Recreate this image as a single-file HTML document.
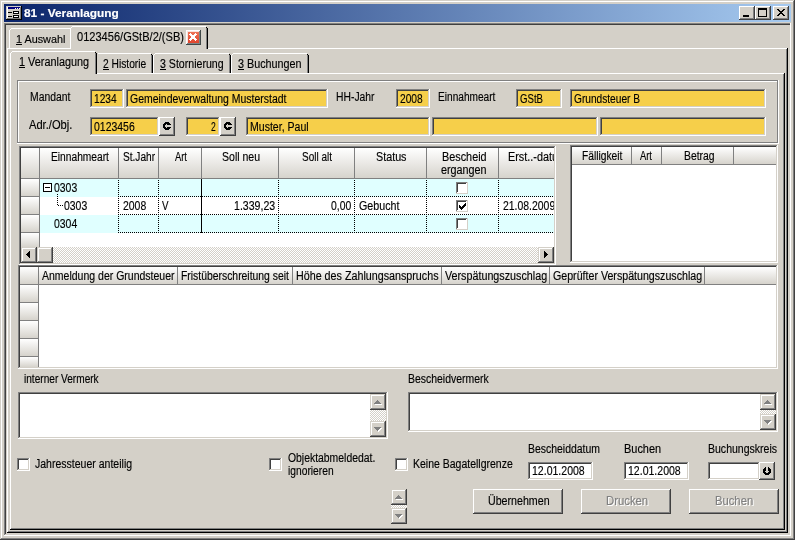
<!DOCTYPE html>
<html lang="de"><head><meta charset="utf-8"><title>81 - Veranlagung</title><style>
html,body{margin:0;padding:0}
body{width:795px;height:544px;background:#fff;overflow:hidden;position:relative;font-family:"Liberation Sans",sans-serif}
#w{position:absolute;left:0;top:0;width:795px;height:540px;background:#d4d0c8;overflow:hidden}
#w div{position:absolute}
#tx{left:0;top:0;width:795px;height:540px;will-change:transform}
.t{position:absolute;white-space:pre;transform-origin:0 0;-webkit-text-stroke-width:0.15px}
svg{position:absolute;overflow:visible}
</style></head><body><div id="w">
<svg width="0" height="0" style="left:0;top:0"><defs><pattern id="dz0" width="2" height="2" patternUnits="userSpaceOnUse"><rect width="2" height="2" fill="#d4d0c8"/><rect width="1" height="1" fill="#fff"/><rect x="1" y="1" width="1" height="1" fill="#fff"/></pattern><pattern id="dz1" width="2" height="2" patternUnits="userSpaceOnUse"><rect width="2" height="2" fill="#fff"/><rect width="1" height="1" fill="#d4d0c8"/><rect x="1" y="1" width="1" height="1" fill="#d4d0c8"/></pattern><pattern id="dt0" width="2" height="2" patternUnits="userSpaceOnUse"><rect width="1" height="1" fill="#000"/><rect x="1" y="1" width="1" height="1" fill="#000"/></pattern><pattern id="dt1" width="2" height="2" patternUnits="userSpaceOnUse"><rect x="1" y="0" width="1" height="1" fill="#000"/><rect x="0" y="1" width="1" height="1" fill="#000"/></pattern></defs></svg>
<div style="left:0px;top:539px;width:795px;height:1px;background:#404040;"></div>
<div style="left:794px;top:0px;width:1px;height:540px;background:#404040;"></div>
<div style="left:1px;top:538px;width:793px;height:1px;background:#808080;"></div>
<div style="left:793px;top:1px;width:1px;height:538px;background:#808080;"></div>
<div style="left:1px;top:1px;width:792px;height:1px;background:#ffffff;"></div>
<div style="left:1px;top:1px;width:1px;height:537px;background:#ffffff;"></div>
<div style="left:4px;top:4px;width:787px;height:18px;background:linear-gradient(to right,#0a246a,#a6caf0)"></div>
<div style="left:6px;top:6px;width:16px;height:14px;background:#d0ccc4;"></div>
<div style="left:6px;top:19px;width:16px;height:1px;background:#000;"></div>
<div style="left:21px;top:6px;width:1px;height:14px;background:#000;"></div>
<div style="left:7px;top:18px;width:14px;height:1px;background:#808080;"></div>
<div style="left:20px;top:7px;width:1px;height:12px;background:#808080;"></div>
<div style="left:7px;top:7px;width:13px;height:1px;background:#ffffff;"></div>
<div style="left:7px;top:7px;width:1px;height:11px;background:#ffffff;"></div>
<div style="left:8px;top:7px;width:12px;height:2px;background:#000080;"></div>
<div style="left:15px;top:8px;width:1px;height:1px;background:#ffffff;"></div>
<div style="left:17px;top:8px;width:1px;height:1px;background:#ffffff;"></div>
<div style="left:19px;top:8px;width:1px;height:1px;background:#ffffff;"></div>
<div style="left:8px;top:12px;width:4px;height:1px;background:#000;"></div>
<div style="left:13px;top:11px;width:6px;height:3px;background:#000;"></div>
<div style="left:14px;top:12px;width:4px;height:1px;background:#ffffff;"></div>
<div style="left:8px;top:16px;width:4px;height:1px;background:#000;"></div>
<div style="left:13px;top:15px;width:6px;height:3px;background:#000;"></div>
<div style="left:14px;top:16px;width:4px;height:1px;background:#ffffff;"></div>
<div style="left:739px;top:6px;width:16px;height:14px;background:#d4d0c8;"></div>
<div style="left:739px;top:19px;width:16px;height:1px;background:#404040;"></div>
<div style="left:754px;top:6px;width:1px;height:14px;background:#404040;"></div>
<div style="left:739px;top:6px;width:15px;height:1px;background:#ffffff;"></div>
<div style="left:739px;top:6px;width:1px;height:13px;background:#ffffff;"></div>
<div style="left:740px;top:18px;width:14px;height:1px;background:#808080;"></div>
<div style="left:753px;top:7px;width:1px;height:12px;background:#808080;"></div>
<div style="left:740px;top:7px;width:13px;height:1px;background:#d4d0c8;"></div>
<div style="left:740px;top:7px;width:1px;height:11px;background:#d4d0c8;"></div>
<div style="left:755px;top:6px;width:16px;height:14px;background:#d4d0c8;"></div>
<div style="left:755px;top:19px;width:16px;height:1px;background:#404040;"></div>
<div style="left:770px;top:6px;width:1px;height:14px;background:#404040;"></div>
<div style="left:755px;top:6px;width:15px;height:1px;background:#ffffff;"></div>
<div style="left:755px;top:6px;width:1px;height:13px;background:#ffffff;"></div>
<div style="left:756px;top:18px;width:14px;height:1px;background:#808080;"></div>
<div style="left:769px;top:7px;width:1px;height:12px;background:#808080;"></div>
<div style="left:756px;top:7px;width:13px;height:1px;background:#d4d0c8;"></div>
<div style="left:756px;top:7px;width:1px;height:11px;background:#d4d0c8;"></div>
<div style="left:773px;top:6px;width:16px;height:14px;background:#d4d0c8;"></div>
<div style="left:773px;top:19px;width:16px;height:1px;background:#404040;"></div>
<div style="left:788px;top:6px;width:1px;height:14px;background:#404040;"></div>
<div style="left:773px;top:6px;width:15px;height:1px;background:#ffffff;"></div>
<div style="left:773px;top:6px;width:1px;height:13px;background:#ffffff;"></div>
<div style="left:774px;top:18px;width:14px;height:1px;background:#808080;"></div>
<div style="left:787px;top:7px;width:1px;height:12px;background:#808080;"></div>
<div style="left:774px;top:7px;width:13px;height:1px;background:#d4d0c8;"></div>
<div style="left:774px;top:7px;width:1px;height:11px;background:#d4d0c8;"></div>
<div style="left:743px;top:15px;width:6px;height:2px;background:#000;"></div>
<div style="left:758px;top:8px;width:9px;height:2px;background:#000;"></div>
<div style="left:758px;top:8px;width:1px;height:9px;background:#000;"></div>
<div style="left:766px;top:8px;width:1px;height:9px;background:#000;"></div>
<div style="left:758px;top:16px;width:9px;height:1px;background:#000;"></div>
<svg style="left:777px;top:9px" width="8" height="7" shape-rendering="crispEdges"><path d="M0 0h2v1h1v1h2v-1h1v-1h2v1h-1v1h-1v1h-1v1h1v1h1v1h1v1h-2v-1h-1v-1h-2v1h-1v1h-2v-1h1v-1h1v-1h1v-1h-1v-1h-1v-1h-1z" fill="#000"/></svg>
<div style="left:4px;top:23px;width:787px;height:1px;background:#808080;"></div>
<div style="left:4px;top:23px;width:1px;height:512px;background:#808080;"></div>
<div style="left:5px;top:24px;width:785px;height:1px;background:#404040;"></div>
<div style="left:5px;top:24px;width:1px;height:510px;background:#404040;"></div>
<div style="left:4px;top:535px;width:787px;height:1px;background:#ffffff;"></div>
<div style="left:790px;top:23px;width:1px;height:513px;background:#ffffff;"></div>
<div style="left:7px;top:48px;width:781px;height:1px;background:#ffffff;"></div>
<div style="left:7px;top:48px;width:1px;height:484px;background:#ffffff;"></div>
<div style="left:786px;top:49px;width:1px;height:483px;background:#808080;"></div>
<div style="left:8px;top:531px;width:779px;height:1px;background:#808080;"></div>
<div style="left:787px;top:48px;width:1px;height:485px;background:#000;"></div>
<div style="left:7px;top:532px;width:781px;height:1px;background:#000;"></div>
<div style="left:9px;top:30px;width:1px;height:18px;background:#ffffff;"></div>
<div style="left:10px;top:29px;width:1px;height:1px;background:#ffffff;"></div>
<div style="left:11px;top:28px;width:59px;height:1px;background:#ffffff;"></div>
<div style="left:16px;top:44px;width:6px;height:1px;background:#000;"></div>
<div style="left:70px;top:26px;width:138px;height:23px;background:#d4d0c8;"></div>
<div style="left:70px;top:28px;width:1px;height:21px;background:#ffffff;"></div>
<div style="left:71px;top:27px;width:1px;height:1px;background:#ffffff;"></div>
<div style="left:72px;top:26px;width:134px;height:1px;background:#ffffff;"></div>
<div style="left:206px;top:28px;width:1px;height:21px;background:#808080;"></div>
<div style="left:207px;top:28px;width:1px;height:21px;background:#000;"></div>
<div style="left:206px;top:27px;width:1px;height:1px;background:#000;"></div>
<div style="left:188px;top:32px;width:11px;height:11px;background:linear-gradient(to bottom,#ee7458,#e0442c);"></div>
<div style="left:186px;top:30px;width:14px;height:1px;background:#ffffff;"></div>
<div style="left:186px;top:30px;width:1px;height:14px;background:#ffffff;"></div>
<div style="left:186px;top:44px;width:15px;height:1px;background:#404848;"></div>
<div style="left:200px;top:30px;width:1px;height:15px;background:#404848;"></div>
<div style="left:187px;top:31px;width:12px;height:1px;background:#f8e4de;"></div>
<div style="left:187px;top:31px;width:1px;height:12px;background:#f8e4de;"></div>
<div style="left:187px;top:43px;width:13px;height:1px;background:#7c8484;"></div>
<div style="left:199px;top:31px;width:1px;height:13px;background:#7c8484;"></div>
<svg style="left:189px;top:33px" width="8" height="8" shape-rendering="crispEdges"><path d="M1 0h1v1h-1zM6 0h1v1h-1zM0 1h3v1h-3zM5 1h3v1h-3zM1 2h6v1h-6zM2 3h4v1h-4zM2 4h4v1h-4zM1 5h6v1h-6zM0 6h3v1h-3zM5 6h3v1h-3zM1 7h1v1h-1zM6 7h1v1h-1z" fill="#fff"/></svg>
<div style="left:10px;top:73px;width:775px;height:1px;background:#ffffff;"></div>
<div style="left:10px;top:73px;width:1px;height:456px;background:#ffffff;"></div>
<div style="left:783px;top:74px;width:1px;height:455px;background:#808080;"></div>
<div style="left:11px;top:528px;width:773px;height:1px;background:#808080;"></div>
<div style="left:784px;top:73px;width:1px;height:457px;background:#000;"></div>
<div style="left:10px;top:529px;width:775px;height:1px;background:#000;"></div>
<div style="left:98px;top:53px;width:53px;height:1px;background:#ffffff;"></div>
<div style="left:151px;top:55px;width:1px;height:18px;background:#808080;"></div>
<div style="left:152px;top:55px;width:1px;height:18px;background:#000;"></div>
<div style="left:151px;top:54px;width:1px;height:1px;background:#000;"></div>
<div style="left:103px;top:69px;width:6px;height:1px;background:#000;"></div>
<div style="left:153px;top:55px;width:1px;height:18px;background:#ffffff;"></div>
<div style="left:154px;top:54px;width:1px;height:1px;background:#ffffff;"></div>
<div style="left:155px;top:53px;width:74px;height:1px;background:#ffffff;"></div>
<div style="left:229px;top:55px;width:1px;height:18px;background:#808080;"></div>
<div style="left:230px;top:55px;width:1px;height:18px;background:#000;"></div>
<div style="left:229px;top:54px;width:1px;height:1px;background:#000;"></div>
<div style="left:160px;top:69px;width:6px;height:1px;background:#000;"></div>
<div style="left:231px;top:55px;width:1px;height:18px;background:#ffffff;"></div>
<div style="left:232px;top:54px;width:1px;height:1px;background:#ffffff;"></div>
<div style="left:233px;top:53px;width:74px;height:1px;background:#ffffff;"></div>
<div style="left:307px;top:55px;width:1px;height:18px;background:#808080;"></div>
<div style="left:308px;top:55px;width:1px;height:18px;background:#000;"></div>
<div style="left:307px;top:54px;width:1px;height:1px;background:#000;"></div>
<div style="left:238px;top:69px;width:6px;height:1px;background:#000;"></div>
<div style="left:10px;top:51px;width:87px;height:23px;background:#d4d0c8;"></div>
<div style="left:10px;top:53px;width:1px;height:21px;background:#ffffff;"></div>
<div style="left:11px;top:52px;width:1px;height:1px;background:#ffffff;"></div>
<div style="left:12px;top:51px;width:83px;height:1px;background:#ffffff;"></div>
<div style="left:95px;top:53px;width:1px;height:21px;background:#808080;"></div>
<div style="left:96px;top:53px;width:1px;height:21px;background:#000;"></div>
<div style="left:95px;top:52px;width:1px;height:1px;background:#000;"></div>
<div style="left:19px;top:67px;width:6px;height:1px;background:#000;"></div>
<div style="left:17px;top:80px;width:761px;height:1px;background:#808080;"></div>
<div style="left:17px;top:80px;width:1px;height:63px;background:#808080;"></div>
<div style="left:17px;top:142px;width:761px;height:1px;background:#808080;"></div>
<div style="left:777px;top:80px;width:1px;height:63px;background:#808080;"></div>
<div style="left:18px;top:81px;width:759px;height:1px;background:#ffffff;"></div>
<div style="left:18px;top:81px;width:1px;height:61px;background:#ffffff;"></div>
<div style="left:17px;top:143px;width:762px;height:1px;background:#ffffff;"></div>
<div style="left:778px;top:80px;width:1px;height:64px;background:#ffffff;"></div>
<div style="left:90px;top:89px;width:34px;height:19px;background:#f6cf4a;"></div>
<div style="left:90px;top:107px;width:34px;height:1px;background:#ffffff;"></div>
<div style="left:123px;top:89px;width:1px;height:19px;background:#ffffff;"></div>
<div style="left:90px;top:89px;width:33px;height:1px;background:#808080;"></div>
<div style="left:90px;top:89px;width:1px;height:18px;background:#808080;"></div>
<div style="left:91px;top:106px;width:32px;height:1px;background:#d4d0c8;"></div>
<div style="left:122px;top:90px;width:1px;height:17px;background:#d4d0c8;"></div>
<div style="left:91px;top:90px;width:31px;height:1px;background:#404040;"></div>
<div style="left:91px;top:90px;width:1px;height:16px;background:#404040;"></div>
<div style="left:126px;top:89px;width:202px;height:19px;background:#f6cf4a;"></div>
<div style="left:126px;top:107px;width:202px;height:1px;background:#ffffff;"></div>
<div style="left:327px;top:89px;width:1px;height:19px;background:#ffffff;"></div>
<div style="left:126px;top:89px;width:201px;height:1px;background:#808080;"></div>
<div style="left:126px;top:89px;width:1px;height:18px;background:#808080;"></div>
<div style="left:127px;top:106px;width:200px;height:1px;background:#d4d0c8;"></div>
<div style="left:326px;top:90px;width:1px;height:17px;background:#d4d0c8;"></div>
<div style="left:127px;top:90px;width:199px;height:1px;background:#404040;"></div>
<div style="left:127px;top:90px;width:1px;height:16px;background:#404040;"></div>
<div style="left:396px;top:89px;width:34px;height:19px;background:#f6cf4a;"></div>
<div style="left:396px;top:107px;width:34px;height:1px;background:#ffffff;"></div>
<div style="left:429px;top:89px;width:1px;height:19px;background:#ffffff;"></div>
<div style="left:396px;top:89px;width:33px;height:1px;background:#808080;"></div>
<div style="left:396px;top:89px;width:1px;height:18px;background:#808080;"></div>
<div style="left:397px;top:106px;width:32px;height:1px;background:#d4d0c8;"></div>
<div style="left:428px;top:90px;width:1px;height:17px;background:#d4d0c8;"></div>
<div style="left:397px;top:90px;width:31px;height:1px;background:#404040;"></div>
<div style="left:397px;top:90px;width:1px;height:16px;background:#404040;"></div>
<div style="left:516px;top:89px;width:46px;height:19px;background:#f6cf4a;"></div>
<div style="left:516px;top:107px;width:46px;height:1px;background:#ffffff;"></div>
<div style="left:561px;top:89px;width:1px;height:19px;background:#ffffff;"></div>
<div style="left:516px;top:89px;width:45px;height:1px;background:#808080;"></div>
<div style="left:516px;top:89px;width:1px;height:18px;background:#808080;"></div>
<div style="left:517px;top:106px;width:44px;height:1px;background:#d4d0c8;"></div>
<div style="left:560px;top:90px;width:1px;height:17px;background:#d4d0c8;"></div>
<div style="left:517px;top:90px;width:43px;height:1px;background:#404040;"></div>
<div style="left:517px;top:90px;width:1px;height:16px;background:#404040;"></div>
<div style="left:570px;top:89px;width:196px;height:19px;background:#f6cf4a;"></div>
<div style="left:570px;top:107px;width:196px;height:1px;background:#ffffff;"></div>
<div style="left:765px;top:89px;width:1px;height:19px;background:#ffffff;"></div>
<div style="left:570px;top:89px;width:195px;height:1px;background:#808080;"></div>
<div style="left:570px;top:89px;width:1px;height:18px;background:#808080;"></div>
<div style="left:571px;top:106px;width:194px;height:1px;background:#d4d0c8;"></div>
<div style="left:764px;top:90px;width:1px;height:17px;background:#d4d0c8;"></div>
<div style="left:571px;top:90px;width:193px;height:1px;background:#404040;"></div>
<div style="left:571px;top:90px;width:1px;height:16px;background:#404040;"></div>
<div style="left:90px;top:117px;width:69px;height:19px;background:#f6cf4a;"></div>
<div style="left:90px;top:135px;width:69px;height:1px;background:#ffffff;"></div>
<div style="left:158px;top:117px;width:1px;height:19px;background:#ffffff;"></div>
<div style="left:90px;top:117px;width:68px;height:1px;background:#808080;"></div>
<div style="left:90px;top:117px;width:1px;height:18px;background:#808080;"></div>
<div style="left:91px;top:134px;width:67px;height:1px;background:#d4d0c8;"></div>
<div style="left:157px;top:118px;width:1px;height:17px;background:#d4d0c8;"></div>
<div style="left:91px;top:118px;width:66px;height:1px;background:#404040;"></div>
<div style="left:91px;top:118px;width:1px;height:16px;background:#404040;"></div>
<div style="left:159px;top:117px;width:16px;height:19px;background:#d4d0c8;"></div>
<div style="left:159px;top:135px;width:16px;height:1px;background:#404040;"></div>
<div style="left:174px;top:117px;width:1px;height:19px;background:#404040;"></div>
<div style="left:159px;top:117px;width:15px;height:1px;background:#ffffff;"></div>
<div style="left:159px;top:117px;width:1px;height:18px;background:#ffffff;"></div>
<div style="left:160px;top:134px;width:14px;height:1px;background:#808080;"></div>
<div style="left:173px;top:118px;width:1px;height:17px;background:#808080;"></div>
<div style="left:160px;top:118px;width:13px;height:1px;background:#d4d0c8;"></div>
<div style="left:160px;top:118px;width:1px;height:16px;background:#d4d0c8;"></div>
<div style="left:186px;top:117px;width:34px;height:19px;background:#f6cf4a;"></div>
<div style="left:186px;top:135px;width:34px;height:1px;background:#ffffff;"></div>
<div style="left:219px;top:117px;width:1px;height:19px;background:#ffffff;"></div>
<div style="left:186px;top:117px;width:33px;height:1px;background:#808080;"></div>
<div style="left:186px;top:117px;width:1px;height:18px;background:#808080;"></div>
<div style="left:187px;top:134px;width:32px;height:1px;background:#d4d0c8;"></div>
<div style="left:218px;top:118px;width:1px;height:17px;background:#d4d0c8;"></div>
<div style="left:187px;top:118px;width:31px;height:1px;background:#404040;"></div>
<div style="left:187px;top:118px;width:1px;height:16px;background:#404040;"></div>
<div style="left:220px;top:117px;width:16px;height:19px;background:#d4d0c8;"></div>
<div style="left:220px;top:135px;width:16px;height:1px;background:#404040;"></div>
<div style="left:235px;top:117px;width:1px;height:19px;background:#404040;"></div>
<div style="left:220px;top:117px;width:15px;height:1px;background:#ffffff;"></div>
<div style="left:220px;top:117px;width:1px;height:18px;background:#ffffff;"></div>
<div style="left:221px;top:134px;width:14px;height:1px;background:#808080;"></div>
<div style="left:234px;top:118px;width:1px;height:17px;background:#808080;"></div>
<div style="left:221px;top:118px;width:13px;height:1px;background:#d4d0c8;"></div>
<div style="left:221px;top:118px;width:1px;height:16px;background:#d4d0c8;"></div>
<div style="left:246px;top:117px;width:184px;height:19px;background:#f6cf4a;"></div>
<div style="left:246px;top:135px;width:184px;height:1px;background:#ffffff;"></div>
<div style="left:429px;top:117px;width:1px;height:19px;background:#ffffff;"></div>
<div style="left:246px;top:117px;width:183px;height:1px;background:#808080;"></div>
<div style="left:246px;top:117px;width:1px;height:18px;background:#808080;"></div>
<div style="left:247px;top:134px;width:182px;height:1px;background:#d4d0c8;"></div>
<div style="left:428px;top:118px;width:1px;height:17px;background:#d4d0c8;"></div>
<div style="left:247px;top:118px;width:181px;height:1px;background:#404040;"></div>
<div style="left:247px;top:118px;width:1px;height:16px;background:#404040;"></div>
<div style="left:432px;top:117px;width:166px;height:19px;background:#f6cf4a;"></div>
<div style="left:432px;top:135px;width:166px;height:1px;background:#ffffff;"></div>
<div style="left:597px;top:117px;width:1px;height:19px;background:#ffffff;"></div>
<div style="left:432px;top:117px;width:165px;height:1px;background:#808080;"></div>
<div style="left:432px;top:117px;width:1px;height:18px;background:#808080;"></div>
<div style="left:433px;top:134px;width:164px;height:1px;background:#d4d0c8;"></div>
<div style="left:596px;top:118px;width:1px;height:17px;background:#d4d0c8;"></div>
<div style="left:433px;top:118px;width:163px;height:1px;background:#404040;"></div>
<div style="left:433px;top:118px;width:1px;height:16px;background:#404040;"></div>
<div style="left:600px;top:117px;width:166px;height:19px;background:#f6cf4a;"></div>
<div style="left:600px;top:135px;width:166px;height:1px;background:#ffffff;"></div>
<div style="left:765px;top:117px;width:1px;height:19px;background:#ffffff;"></div>
<div style="left:600px;top:117px;width:165px;height:1px;background:#808080;"></div>
<div style="left:600px;top:117px;width:1px;height:18px;background:#808080;"></div>
<div style="left:601px;top:134px;width:164px;height:1px;background:#d4d0c8;"></div>
<div style="left:764px;top:118px;width:1px;height:17px;background:#d4d0c8;"></div>
<div style="left:601px;top:118px;width:163px;height:1px;background:#404040;"></div>
<div style="left:601px;top:118px;width:1px;height:16px;background:#404040;"></div>
<svg style="left:163px;top:122px" width="8" height="8" shape-rendering="crispEdges"><path d="M2 0h4v1h-4zM1 1h6v1h-6zM0 2h3v1h-3zM4 2h4v1h-4zM0 3h2v1h-2zM0 4h2v1h-2zM0 5h3v1h-3zM4 5h4v1h-4zM1 6h6v1h-6zM2 7h4v1h-4z" fill="#000"/></svg>
<svg style="left:224px;top:122px" width="8" height="8" shape-rendering="crispEdges"><path d="M2 0h4v1h-4zM1 1h6v1h-6zM0 2h3v1h-3zM4 2h4v1h-4zM0 3h2v1h-2zM0 4h2v1h-2zM0 5h3v1h-3zM4 5h4v1h-4zM1 6h6v1h-6zM2 7h4v1h-4z" fill="#000"/></svg>
<div style="left:19px;top:146px;width:537px;height:119px;background:#fff;"></div>
<div style="left:19px;top:264px;width:537px;height:1px;background:#ffffff;"></div>
<div style="left:555px;top:146px;width:1px;height:119px;background:#ffffff;"></div>
<div style="left:19px;top:146px;width:536px;height:1px;background:#808080;"></div>
<div style="left:19px;top:146px;width:1px;height:118px;background:#808080;"></div>
<div style="left:20px;top:263px;width:535px;height:1px;background:#d4d0c8;"></div>
<div style="left:554px;top:147px;width:1px;height:117px;background:#d4d0c8;"></div>
<div style="left:20px;top:147px;width:534px;height:1px;background:#404040;"></div>
<div style="left:20px;top:147px;width:1px;height:116px;background:#404040;"></div>
<div style="left:21px;top:148px;width:533px;height:30px;background:linear-gradient(to bottom,#ffffff,#d6d3cc);"></div>
<div style="left:39px;top:148px;width:1px;height:30px;background:#808080;"></div>
<div style="left:118px;top:148px;width:1px;height:30px;background:#808080;"></div>
<div style="left:158px;top:148px;width:1px;height:30px;background:#808080;"></div>
<div style="left:201px;top:148px;width:1px;height:30px;background:#808080;"></div>
<div style="left:278px;top:148px;width:1px;height:30px;background:#808080;"></div>
<div style="left:354px;top:148px;width:1px;height:30px;background:#808080;"></div>
<div style="left:426px;top:148px;width:1px;height:30px;background:#808080;"></div>
<div style="left:498px;top:148px;width:1px;height:30px;background:#808080;"></div>
<div style="left:21px;top:178px;width:533px;height:1px;background:#808080;"></div>
<div style="left:21px;top:179px;width:18px;height:17px;background:linear-gradient(to bottom,#ffffff,#d6d3cc);"></div>
<div style="left:21px;top:196px;width:18px;height:1px;background:#808080;"></div>
<div style="left:21px;top:197px;width:18px;height:17px;background:linear-gradient(to bottom,#ffffff,#d6d3cc);"></div>
<div style="left:21px;top:214px;width:18px;height:1px;background:#808080;"></div>
<div style="left:21px;top:215px;width:18px;height:17px;background:linear-gradient(to bottom,#ffffff,#d6d3cc);"></div>
<div style="left:21px;top:232px;width:18px;height:1px;background:#808080;"></div>
<div style="left:21px;top:233px;width:18px;height:14px;background:linear-gradient(to bottom,#ffffff,#d6d3cc);"></div>
<div style="left:39px;top:179px;width:1px;height:68px;background:#808080;"></div>
<div style="left:40px;top:179px;width:514px;height:18px;background:#e0ffff;"></div>
<div style="left:40px;top:215px;width:514px;height:18px;background:#e0ffff;"></div>
<svg style="left:118px;top:196px" width="436" height="1" shape-rendering="crispEdges"><rect width="436" height="1" fill="url(#dt0)"/></svg>
<svg style="left:118px;top:214px" width="436" height="1" shape-rendering="crispEdges"><rect width="436" height="1" fill="url(#dt0)"/></svg>
<svg style="left:118px;top:232px" width="436" height="1" shape-rendering="crispEdges"><rect width="436" height="1" fill="url(#dt0)"/></svg>
<svg style="left:118px;top:179px" width="1" height="54" shape-rendering="crispEdges"><rect width="1" height="54" fill="url(#dt1)"/></svg>
<svg style="left:158px;top:179px" width="1" height="54" shape-rendering="crispEdges"><rect width="1" height="54" fill="url(#dt1)"/></svg>
<svg style="left:278px;top:179px" width="1" height="54" shape-rendering="crispEdges"><rect width="1" height="54" fill="url(#dt1)"/></svg>
<svg style="left:354px;top:179px" width="1" height="54" shape-rendering="crispEdges"><rect width="1" height="54" fill="url(#dt1)"/></svg>
<svg style="left:426px;top:179px" width="1" height="54" shape-rendering="crispEdges"><rect width="1" height="54" fill="url(#dt1)"/></svg>
<svg style="left:498px;top:179px" width="1" height="54" shape-rendering="crispEdges"><rect width="1" height="54" fill="url(#dt1)"/></svg>
<div style="left:201px;top:179px;width:1px;height:54px;background:#000;"></div>
<div style="left:43px;top:183px;width:9px;height:1px;background:#000;"></div>
<div style="left:43px;top:183px;width:1px;height:9px;background:#000;"></div>
<div style="left:43px;top:191px;width:9px;height:1px;background:#000;"></div>
<div style="left:51px;top:183px;width:1px;height:9px;background:#000;"></div>
<div style="left:44px;top:184px;width:7px;height:7px;background:#fff;"></div>
<div style="left:45px;top:187px;width:5px;height:1px;background:#000;"></div>
<svg style="left:57px;top:193px" width="1" height="13" shape-rendering="crispEdges"><rect width="1" height="13" fill="url(#dt1)"/></svg>
<svg style="left:57px;top:205px" width="6" height="1" shape-rendering="crispEdges"><rect width="6" height="1" fill="url(#dt1)"/></svg>
<div style="left:456px;top:182px;width:12px;height:12px;background:#fff;"></div>
<div style="left:456px;top:182px;width:11px;height:1px;background:#808080;"></div>
<div style="left:456px;top:182px;width:1px;height:11px;background:#808080;"></div>
<div style="left:457px;top:183px;width:9px;height:1px;background:#404040;"></div>
<div style="left:457px;top:183px;width:1px;height:9px;background:#404040;"></div>
<div style="left:456px;top:193px;width:12px;height:1px;background:#d4d0c8;"></div>
<div style="left:467px;top:182px;width:1px;height:12px;background:#d4d0c8;"></div>
<div style="left:456px;top:200px;width:12px;height:12px;background:#fff;"></div>
<div style="left:456px;top:200px;width:11px;height:1px;background:#808080;"></div>
<div style="left:456px;top:200px;width:1px;height:11px;background:#808080;"></div>
<div style="left:457px;top:201px;width:9px;height:1px;background:#404040;"></div>
<div style="left:457px;top:201px;width:1px;height:9px;background:#404040;"></div>
<div style="left:456px;top:211px;width:12px;height:1px;background:#d4d0c8;"></div>
<div style="left:467px;top:200px;width:1px;height:12px;background:#d4d0c8;"></div>
<svg style="left:459px;top:203px" width="7" height="7" shape-rendering="crispEdges"><path d="M6 0h1v1h-1zM5 1h2v1h-2zM0 2h1v1h-1zM4 2h3v1h-3zM0 3h2v1h-2zM3 3h3v1h-3zM0 4h5v1h-5zM1 5h3v1h-3zM2 6h1v1h-1z" fill="#000"/></svg>
<div style="left:456px;top:218px;width:12px;height:12px;background:#fff;"></div>
<div style="left:456px;top:218px;width:11px;height:1px;background:#808080;"></div>
<div style="left:456px;top:218px;width:1px;height:11px;background:#808080;"></div>
<div style="left:457px;top:219px;width:9px;height:1px;background:#404040;"></div>
<div style="left:457px;top:219px;width:1px;height:9px;background:#404040;"></div>
<div style="left:456px;top:229px;width:12px;height:1px;background:#d4d0c8;"></div>
<div style="left:467px;top:218px;width:1px;height:12px;background:#d4d0c8;"></div>
<svg style="left:21px;top:247px" width="533" height="16" shape-rendering="crispEdges"><rect width="533" height="16" fill="url(#dz0)"/></svg>
<div style="left:21px;top:247px;width:16px;height:16px;background:#d4d0c8;"></div>
<div style="left:21px;top:262px;width:16px;height:1px;background:#404040;"></div>
<div style="left:36px;top:247px;width:1px;height:16px;background:#404040;"></div>
<div style="left:21px;top:247px;width:15px;height:1px;background:#d4d0c8;"></div>
<div style="left:21px;top:247px;width:1px;height:15px;background:#d4d0c8;"></div>
<div style="left:22px;top:261px;width:14px;height:1px;background:#808080;"></div>
<div style="left:35px;top:248px;width:1px;height:14px;background:#808080;"></div>
<div style="left:22px;top:248px;width:13px;height:1px;background:#ffffff;"></div>
<div style="left:22px;top:248px;width:1px;height:13px;background:#ffffff;"></div>
<div style="left:29px;top:251px;width:1px;height:1px;background:#000;"></div>
<div style="left:28px;top:252px;width:2px;height:1px;background:#000;"></div>
<div style="left:27px;top:253px;width:3px;height:1px;background:#000;"></div>
<div style="left:26px;top:254px;width:4px;height:1px;background:#000;"></div>
<div style="left:27px;top:255px;width:3px;height:1px;background:#000;"></div>
<div style="left:28px;top:256px;width:2px;height:1px;background:#000;"></div>
<div style="left:29px;top:257px;width:1px;height:1px;background:#000;"></div>
<div style="left:37px;top:247px;width:16px;height:16px;background:#d4d0c8;"></div>
<div style="left:37px;top:262px;width:16px;height:1px;background:#404040;"></div>
<div style="left:52px;top:247px;width:1px;height:16px;background:#404040;"></div>
<div style="left:37px;top:247px;width:15px;height:1px;background:#d4d0c8;"></div>
<div style="left:37px;top:247px;width:1px;height:15px;background:#d4d0c8;"></div>
<div style="left:38px;top:261px;width:14px;height:1px;background:#808080;"></div>
<div style="left:51px;top:248px;width:1px;height:14px;background:#808080;"></div>
<div style="left:38px;top:248px;width:13px;height:1px;background:#ffffff;"></div>
<div style="left:38px;top:248px;width:1px;height:13px;background:#ffffff;"></div>
<div style="left:538px;top:247px;width:16px;height:16px;background:#d4d0c8;"></div>
<div style="left:538px;top:262px;width:16px;height:1px;background:#404040;"></div>
<div style="left:553px;top:247px;width:1px;height:16px;background:#404040;"></div>
<div style="left:538px;top:247px;width:15px;height:1px;background:#d4d0c8;"></div>
<div style="left:538px;top:247px;width:1px;height:15px;background:#d4d0c8;"></div>
<div style="left:539px;top:261px;width:14px;height:1px;background:#808080;"></div>
<div style="left:552px;top:248px;width:1px;height:14px;background:#808080;"></div>
<div style="left:539px;top:248px;width:13px;height:1px;background:#ffffff;"></div>
<div style="left:539px;top:248px;width:1px;height:13px;background:#ffffff;"></div>
<div style="left:544px;top:251px;width:1px;height:1px;background:#000;"></div>
<div style="left:544px;top:252px;width:2px;height:1px;background:#000;"></div>
<div style="left:544px;top:253px;width:3px;height:1px;background:#000;"></div>
<div style="left:544px;top:254px;width:4px;height:1px;background:#000;"></div>
<div style="left:544px;top:255px;width:3px;height:1px;background:#000;"></div>
<div style="left:544px;top:256px;width:2px;height:1px;background:#000;"></div>
<div style="left:544px;top:257px;width:1px;height:1px;background:#000;"></div>
<div style="left:570px;top:145px;width:208px;height:118px;background:#fff;"></div>
<div style="left:570px;top:262px;width:208px;height:1px;background:#ffffff;"></div>
<div style="left:777px;top:145px;width:1px;height:118px;background:#ffffff;"></div>
<div style="left:570px;top:145px;width:207px;height:1px;background:#808080;"></div>
<div style="left:570px;top:145px;width:1px;height:117px;background:#808080;"></div>
<div style="left:571px;top:261px;width:206px;height:1px;background:#d4d0c8;"></div>
<div style="left:776px;top:146px;width:1px;height:116px;background:#d4d0c8;"></div>
<div style="left:571px;top:146px;width:205px;height:1px;background:#404040;"></div>
<div style="left:571px;top:146px;width:1px;height:115px;background:#404040;"></div>
<div style="left:572px;top:147px;width:204px;height:17px;background:linear-gradient(to bottom,#ffffff,#d6d3cc);"></div>
<div style="left:572px;top:164px;width:204px;height:1px;background:#808080;"></div>
<div style="left:631px;top:147px;width:1px;height:17px;background:#808080;"></div>
<div style="left:661px;top:147px;width:1px;height:17px;background:#808080;"></div>
<div style="left:733px;top:147px;width:1px;height:17px;background:#808080;"></div>
<div style="left:18px;top:265px;width:760px;height:104px;background:#fff;"></div>
<div style="left:18px;top:368px;width:760px;height:1px;background:#ffffff;"></div>
<div style="left:777px;top:265px;width:1px;height:104px;background:#ffffff;"></div>
<div style="left:18px;top:265px;width:759px;height:1px;background:#808080;"></div>
<div style="left:18px;top:265px;width:1px;height:103px;background:#808080;"></div>
<div style="left:19px;top:367px;width:758px;height:1px;background:#d4d0c8;"></div>
<div style="left:776px;top:266px;width:1px;height:102px;background:#d4d0c8;"></div>
<div style="left:19px;top:266px;width:757px;height:1px;background:#404040;"></div>
<div style="left:19px;top:266px;width:1px;height:101px;background:#404040;"></div>
<div style="left:20px;top:267px;width:756px;height:17px;background:linear-gradient(to bottom,#ffffff,#d6d3cc);"></div>
<div style="left:20px;top:284px;width:756px;height:1px;background:#808080;"></div>
<div style="left:38px;top:267px;width:1px;height:17px;background:#808080;"></div>
<div style="left:177px;top:267px;width:1px;height:17px;background:#808080;"></div>
<div style="left:292px;top:267px;width:1px;height:17px;background:#808080;"></div>
<div style="left:441px;top:267px;width:1px;height:17px;background:#808080;"></div>
<div style="left:549px;top:267px;width:1px;height:17px;background:#808080;"></div>
<div style="left:704px;top:267px;width:1px;height:17px;background:#808080;"></div>
<div style="left:20px;top:285px;width:18px;height:17px;background:linear-gradient(to bottom,#ffffff,#d6d3cc);"></div>
<div style="left:20px;top:302px;width:18px;height:1px;background:#808080;"></div>
<div style="left:20px;top:303px;width:18px;height:17px;background:linear-gradient(to bottom,#ffffff,#d6d3cc);"></div>
<div style="left:20px;top:320px;width:18px;height:1px;background:#808080;"></div>
<div style="left:20px;top:321px;width:18px;height:17px;background:linear-gradient(to bottom,#ffffff,#d6d3cc);"></div>
<div style="left:20px;top:338px;width:18px;height:1px;background:#808080;"></div>
<div style="left:20px;top:339px;width:18px;height:17px;background:linear-gradient(to bottom,#ffffff,#d6d3cc);"></div>
<div style="left:20px;top:356px;width:18px;height:1px;background:#808080;"></div>
<div style="left:20px;top:357px;width:18px;height:10px;background:linear-gradient(to bottom,#ffffff,#d6d3cc);"></div>
<div style="left:38px;top:285px;width:1px;height:82px;background:#808080;"></div>
<div style="left:18px;top:392px;width:370px;height:47px;background:#fff;"></div>
<div style="left:18px;top:438px;width:370px;height:1px;background:#ffffff;"></div>
<div style="left:387px;top:392px;width:1px;height:47px;background:#ffffff;"></div>
<div style="left:18px;top:392px;width:369px;height:1px;background:#808080;"></div>
<div style="left:18px;top:392px;width:1px;height:46px;background:#808080;"></div>
<div style="left:19px;top:437px;width:368px;height:1px;background:#d4d0c8;"></div>
<div style="left:386px;top:393px;width:1px;height:45px;background:#d4d0c8;"></div>
<div style="left:19px;top:393px;width:367px;height:1px;background:#404040;"></div>
<div style="left:19px;top:393px;width:1px;height:44px;background:#404040;"></div>
<svg style="left:370px;top:394px" width="16" height="43" shape-rendering="crispEdges"><rect width="16" height="43" fill="url(#dz0)"/></svg>
<div style="left:370px;top:394px;width:16px;height:16px;background:#d4d0c8;"></div>
<div style="left:370px;top:409px;width:16px;height:1px;background:#404040;"></div>
<div style="left:385px;top:394px;width:1px;height:16px;background:#404040;"></div>
<div style="left:370px;top:394px;width:15px;height:1px;background:#d4d0c8;"></div>
<div style="left:370px;top:394px;width:1px;height:15px;background:#d4d0c8;"></div>
<div style="left:371px;top:408px;width:14px;height:1px;background:#808080;"></div>
<div style="left:384px;top:395px;width:1px;height:14px;background:#808080;"></div>
<div style="left:371px;top:395px;width:13px;height:1px;background:#ffffff;"></div>
<div style="left:371px;top:395px;width:1px;height:13px;background:#ffffff;"></div>
<div style="left:370px;top:421px;width:16px;height:16px;background:#d4d0c8;"></div>
<div style="left:370px;top:436px;width:16px;height:1px;background:#404040;"></div>
<div style="left:385px;top:421px;width:1px;height:16px;background:#404040;"></div>
<div style="left:370px;top:421px;width:15px;height:1px;background:#d4d0c8;"></div>
<div style="left:370px;top:421px;width:1px;height:15px;background:#d4d0c8;"></div>
<div style="left:371px;top:435px;width:14px;height:1px;background:#808080;"></div>
<div style="left:384px;top:422px;width:1px;height:14px;background:#808080;"></div>
<div style="left:371px;top:422px;width:13px;height:1px;background:#ffffff;"></div>
<div style="left:371px;top:422px;width:1px;height:13px;background:#ffffff;"></div>
<div style="left:378px;top:401px;width:1px;height:1px;background:#ffffff;"></div>
<div style="left:377px;top:402px;width:3px;height:1px;background:#ffffff;"></div>
<div style="left:376px;top:403px;width:5px;height:1px;background:#ffffff;"></div>
<div style="left:375px;top:404px;width:7px;height:1px;background:#ffffff;"></div>
<div style="left:375px;top:428px;width:7px;height:1px;background:#ffffff;"></div>
<div style="left:376px;top:429px;width:5px;height:1px;background:#ffffff;"></div>
<div style="left:377px;top:430px;width:3px;height:1px;background:#ffffff;"></div>
<div style="left:378px;top:431px;width:1px;height:1px;background:#ffffff;"></div>
<div style="left:377px;top:400px;width:1px;height:1px;background:#808080;"></div>
<div style="left:376px;top:401px;width:3px;height:1px;background:#808080;"></div>
<div style="left:375px;top:402px;width:5px;height:1px;background:#808080;"></div>
<div style="left:374px;top:403px;width:7px;height:1px;background:#808080;"></div>
<div style="left:374px;top:427px;width:7px;height:1px;background:#808080;"></div>
<div style="left:375px;top:428px;width:5px;height:1px;background:#808080;"></div>
<div style="left:376px;top:429px;width:3px;height:1px;background:#808080;"></div>
<div style="left:377px;top:430px;width:1px;height:1px;background:#808080;"></div>
<div style="left:408px;top:392px;width:370px;height:40px;background:#fff;"></div>
<div style="left:408px;top:431px;width:370px;height:1px;background:#ffffff;"></div>
<div style="left:777px;top:392px;width:1px;height:40px;background:#ffffff;"></div>
<div style="left:408px;top:392px;width:369px;height:1px;background:#808080;"></div>
<div style="left:408px;top:392px;width:1px;height:39px;background:#808080;"></div>
<div style="left:409px;top:430px;width:368px;height:1px;background:#d4d0c8;"></div>
<div style="left:776px;top:393px;width:1px;height:38px;background:#d4d0c8;"></div>
<div style="left:409px;top:393px;width:367px;height:1px;background:#404040;"></div>
<div style="left:409px;top:393px;width:1px;height:37px;background:#404040;"></div>
<svg style="left:760px;top:394px" width="16" height="36" shape-rendering="crispEdges"><rect width="16" height="36" fill="url(#dz0)"/></svg>
<div style="left:760px;top:394px;width:16px;height:16px;background:#d4d0c8;"></div>
<div style="left:760px;top:409px;width:16px;height:1px;background:#404040;"></div>
<div style="left:775px;top:394px;width:1px;height:16px;background:#404040;"></div>
<div style="left:760px;top:394px;width:15px;height:1px;background:#d4d0c8;"></div>
<div style="left:760px;top:394px;width:1px;height:15px;background:#d4d0c8;"></div>
<div style="left:761px;top:408px;width:14px;height:1px;background:#808080;"></div>
<div style="left:774px;top:395px;width:1px;height:14px;background:#808080;"></div>
<div style="left:761px;top:395px;width:13px;height:1px;background:#ffffff;"></div>
<div style="left:761px;top:395px;width:1px;height:13px;background:#ffffff;"></div>
<div style="left:760px;top:414px;width:16px;height:16px;background:#d4d0c8;"></div>
<div style="left:760px;top:429px;width:16px;height:1px;background:#404040;"></div>
<div style="left:775px;top:414px;width:1px;height:16px;background:#404040;"></div>
<div style="left:760px;top:414px;width:15px;height:1px;background:#d4d0c8;"></div>
<div style="left:760px;top:414px;width:1px;height:15px;background:#d4d0c8;"></div>
<div style="left:761px;top:428px;width:14px;height:1px;background:#808080;"></div>
<div style="left:774px;top:415px;width:1px;height:14px;background:#808080;"></div>
<div style="left:761px;top:415px;width:13px;height:1px;background:#ffffff;"></div>
<div style="left:761px;top:415px;width:1px;height:13px;background:#ffffff;"></div>
<div style="left:768px;top:401px;width:1px;height:1px;background:#ffffff;"></div>
<div style="left:767px;top:402px;width:3px;height:1px;background:#ffffff;"></div>
<div style="left:766px;top:403px;width:5px;height:1px;background:#ffffff;"></div>
<div style="left:765px;top:404px;width:7px;height:1px;background:#ffffff;"></div>
<div style="left:765px;top:421px;width:7px;height:1px;background:#ffffff;"></div>
<div style="left:766px;top:422px;width:5px;height:1px;background:#ffffff;"></div>
<div style="left:767px;top:423px;width:3px;height:1px;background:#ffffff;"></div>
<div style="left:768px;top:424px;width:1px;height:1px;background:#ffffff;"></div>
<div style="left:767px;top:400px;width:1px;height:1px;background:#808080;"></div>
<div style="left:766px;top:401px;width:3px;height:1px;background:#808080;"></div>
<div style="left:765px;top:402px;width:5px;height:1px;background:#808080;"></div>
<div style="left:764px;top:403px;width:7px;height:1px;background:#808080;"></div>
<div style="left:764px;top:420px;width:7px;height:1px;background:#808080;"></div>
<div style="left:765px;top:421px;width:5px;height:1px;background:#808080;"></div>
<div style="left:766px;top:422px;width:3px;height:1px;background:#808080;"></div>
<div style="left:767px;top:423px;width:1px;height:1px;background:#808080;"></div>
<div style="left:17px;top:458px;width:13px;height:13px;background:#fff;"></div>
<div style="left:17px;top:470px;width:13px;height:1px;background:#ffffff;"></div>
<div style="left:29px;top:458px;width:1px;height:13px;background:#ffffff;"></div>
<div style="left:17px;top:458px;width:12px;height:1px;background:#808080;"></div>
<div style="left:17px;top:458px;width:1px;height:12px;background:#808080;"></div>
<div style="left:18px;top:469px;width:11px;height:1px;background:#d4d0c8;"></div>
<div style="left:28px;top:459px;width:1px;height:11px;background:#d4d0c8;"></div>
<div style="left:18px;top:459px;width:10px;height:1px;background:#404040;"></div>
<div style="left:18px;top:459px;width:1px;height:10px;background:#404040;"></div>
<div style="left:269px;top:458px;width:13px;height:13px;background:#fff;"></div>
<div style="left:269px;top:470px;width:13px;height:1px;background:#ffffff;"></div>
<div style="left:281px;top:458px;width:1px;height:13px;background:#ffffff;"></div>
<div style="left:269px;top:458px;width:12px;height:1px;background:#808080;"></div>
<div style="left:269px;top:458px;width:1px;height:12px;background:#808080;"></div>
<div style="left:270px;top:469px;width:11px;height:1px;background:#d4d0c8;"></div>
<div style="left:280px;top:459px;width:1px;height:11px;background:#d4d0c8;"></div>
<div style="left:270px;top:459px;width:10px;height:1px;background:#404040;"></div>
<div style="left:270px;top:459px;width:1px;height:10px;background:#404040;"></div>
<div style="left:395px;top:458px;width:13px;height:13px;background:#fff;"></div>
<div style="left:395px;top:470px;width:13px;height:1px;background:#ffffff;"></div>
<div style="left:407px;top:458px;width:1px;height:13px;background:#ffffff;"></div>
<div style="left:395px;top:458px;width:12px;height:1px;background:#808080;"></div>
<div style="left:395px;top:458px;width:1px;height:12px;background:#808080;"></div>
<div style="left:396px;top:469px;width:11px;height:1px;background:#d4d0c8;"></div>
<div style="left:406px;top:459px;width:1px;height:11px;background:#d4d0c8;"></div>
<div style="left:396px;top:459px;width:10px;height:1px;background:#404040;"></div>
<div style="left:396px;top:459px;width:1px;height:10px;background:#404040;"></div>
<div style="left:528px;top:462px;width:65px;height:18px;background:#fff;"></div>
<div style="left:528px;top:479px;width:65px;height:1px;background:#ffffff;"></div>
<div style="left:592px;top:462px;width:1px;height:18px;background:#ffffff;"></div>
<div style="left:528px;top:462px;width:64px;height:1px;background:#808080;"></div>
<div style="left:528px;top:462px;width:1px;height:17px;background:#808080;"></div>
<div style="left:529px;top:478px;width:63px;height:1px;background:#d4d0c8;"></div>
<div style="left:591px;top:463px;width:1px;height:16px;background:#d4d0c8;"></div>
<div style="left:529px;top:463px;width:62px;height:1px;background:#404040;"></div>
<div style="left:529px;top:463px;width:1px;height:15px;background:#404040;"></div>
<div style="left:624px;top:462px;width:65px;height:18px;background:#fff;"></div>
<div style="left:624px;top:479px;width:65px;height:1px;background:#ffffff;"></div>
<div style="left:688px;top:462px;width:1px;height:18px;background:#ffffff;"></div>
<div style="left:624px;top:462px;width:64px;height:1px;background:#808080;"></div>
<div style="left:624px;top:462px;width:1px;height:17px;background:#808080;"></div>
<div style="left:625px;top:478px;width:63px;height:1px;background:#d4d0c8;"></div>
<div style="left:687px;top:463px;width:1px;height:16px;background:#d4d0c8;"></div>
<div style="left:625px;top:463px;width:62px;height:1px;background:#404040;"></div>
<div style="left:625px;top:463px;width:1px;height:15px;background:#404040;"></div>
<div style="left:708px;top:462px;width:52px;height:18px;background:#fff;"></div>
<div style="left:708px;top:479px;width:52px;height:1px;background:#ffffff;"></div>
<div style="left:759px;top:462px;width:1px;height:18px;background:#ffffff;"></div>
<div style="left:708px;top:462px;width:51px;height:1px;background:#808080;"></div>
<div style="left:708px;top:462px;width:1px;height:17px;background:#808080;"></div>
<div style="left:709px;top:478px;width:50px;height:1px;background:#d4d0c8;"></div>
<div style="left:758px;top:463px;width:1px;height:16px;background:#d4d0c8;"></div>
<div style="left:709px;top:463px;width:49px;height:1px;background:#404040;"></div>
<div style="left:709px;top:463px;width:1px;height:15px;background:#404040;"></div>
<div style="left:759px;top:462px;width:16px;height:18px;background:#d4d0c8;"></div>
<div style="left:759px;top:479px;width:16px;height:1px;background:#404040;"></div>
<div style="left:774px;top:462px;width:1px;height:18px;background:#404040;"></div>
<div style="left:759px;top:462px;width:15px;height:1px;background:#ffffff;"></div>
<div style="left:759px;top:462px;width:1px;height:17px;background:#ffffff;"></div>
<div style="left:760px;top:478px;width:14px;height:1px;background:#808080;"></div>
<div style="left:773px;top:463px;width:1px;height:16px;background:#808080;"></div>
<div style="left:760px;top:463px;width:13px;height:1px;background:#d4d0c8;"></div>
<div style="left:760px;top:463px;width:1px;height:15px;background:#d4d0c8;"></div>
<svg style="left:763px;top:467px" width="8" height="8" shape-rendering="crispEdges"><path d="M2 0h1v1h-1zM5 0h1v1h-1zM1 1h2v1h-2zM5 1h2v1h-2zM0 2h3v1h-3zM5 2h3v1h-3zM0 3h3v1h-3zM5 3h3v1h-3zM0 4h2v1h-2zM6 4h2v1h-2zM0 5h3v1h-3zM5 5h3v1h-3zM1 6h6v1h-6zM2 7h4v1h-4z" fill="#000"/></svg>
<svg style="left:391px;top:505px" width="16" height="3" shape-rendering="crispEdges"><rect width="16" height="3" fill="url(#dz0)"/></svg>
<div style="left:391px;top:489px;width:16px;height:16px;background:#d4d0c8;"></div>
<div style="left:391px;top:504px;width:16px;height:1px;background:#404040;"></div>
<div style="left:406px;top:489px;width:1px;height:16px;background:#404040;"></div>
<div style="left:391px;top:489px;width:15px;height:1px;background:#d4d0c8;"></div>
<div style="left:391px;top:489px;width:1px;height:15px;background:#d4d0c8;"></div>
<div style="left:392px;top:503px;width:14px;height:1px;background:#808080;"></div>
<div style="left:405px;top:490px;width:1px;height:14px;background:#808080;"></div>
<div style="left:392px;top:490px;width:13px;height:1px;background:#ffffff;"></div>
<div style="left:392px;top:490px;width:1px;height:13px;background:#ffffff;"></div>
<div style="left:391px;top:508px;width:16px;height:16px;background:#d4d0c8;"></div>
<div style="left:391px;top:523px;width:16px;height:1px;background:#404040;"></div>
<div style="left:406px;top:508px;width:1px;height:16px;background:#404040;"></div>
<div style="left:391px;top:508px;width:15px;height:1px;background:#d4d0c8;"></div>
<div style="left:391px;top:508px;width:1px;height:15px;background:#d4d0c8;"></div>
<div style="left:392px;top:522px;width:14px;height:1px;background:#808080;"></div>
<div style="left:405px;top:509px;width:1px;height:14px;background:#808080;"></div>
<div style="left:392px;top:509px;width:13px;height:1px;background:#ffffff;"></div>
<div style="left:392px;top:509px;width:1px;height:13px;background:#ffffff;"></div>
<div style="left:399px;top:496px;width:1px;height:1px;background:#ffffff;"></div>
<div style="left:398px;top:497px;width:3px;height:1px;background:#ffffff;"></div>
<div style="left:397px;top:498px;width:5px;height:1px;background:#ffffff;"></div>
<div style="left:396px;top:499px;width:7px;height:1px;background:#ffffff;"></div>
<div style="left:396px;top:515px;width:7px;height:1px;background:#ffffff;"></div>
<div style="left:397px;top:516px;width:5px;height:1px;background:#ffffff;"></div>
<div style="left:398px;top:517px;width:3px;height:1px;background:#ffffff;"></div>
<div style="left:399px;top:518px;width:1px;height:1px;background:#ffffff;"></div>
<div style="left:398px;top:495px;width:1px;height:1px;background:#808080;"></div>
<div style="left:397px;top:496px;width:3px;height:1px;background:#808080;"></div>
<div style="left:396px;top:497px;width:5px;height:1px;background:#808080;"></div>
<div style="left:395px;top:498px;width:7px;height:1px;background:#808080;"></div>
<div style="left:395px;top:514px;width:7px;height:1px;background:#808080;"></div>
<div style="left:396px;top:515px;width:5px;height:1px;background:#808080;"></div>
<div style="left:397px;top:516px;width:3px;height:1px;background:#808080;"></div>
<div style="left:398px;top:517px;width:1px;height:1px;background:#808080;"></div>
<div style="left:473px;top:489px;width:90px;height:25px;background:#d4d0c8;"></div>
<div style="left:473px;top:513px;width:90px;height:1px;background:#404040;"></div>
<div style="left:562px;top:489px;width:1px;height:25px;background:#404040;"></div>
<div style="left:473px;top:489px;width:89px;height:1px;background:#ffffff;"></div>
<div style="left:473px;top:489px;width:1px;height:24px;background:#ffffff;"></div>
<div style="left:474px;top:512px;width:88px;height:1px;background:#808080;"></div>
<div style="left:561px;top:490px;width:1px;height:23px;background:#808080;"></div>
<div style="left:474px;top:490px;width:87px;height:1px;background:#d4d0c8;"></div>
<div style="left:474px;top:490px;width:1px;height:22px;background:#d4d0c8;"></div>
<div style="left:581px;top:489px;width:90px;height:25px;background:#d4d0c8;"></div>
<div style="left:581px;top:513px;width:90px;height:1px;background:#404040;"></div>
<div style="left:670px;top:489px;width:1px;height:25px;background:#404040;"></div>
<div style="left:581px;top:489px;width:89px;height:1px;background:#ffffff;"></div>
<div style="left:581px;top:489px;width:1px;height:24px;background:#ffffff;"></div>
<div style="left:582px;top:512px;width:88px;height:1px;background:#808080;"></div>
<div style="left:669px;top:490px;width:1px;height:23px;background:#808080;"></div>
<div style="left:582px;top:490px;width:87px;height:1px;background:#d4d0c8;"></div>
<div style="left:582px;top:490px;width:1px;height:22px;background:#d4d0c8;"></div>
<div style="left:689px;top:489px;width:90px;height:25px;background:#d4d0c8;"></div>
<div style="left:689px;top:513px;width:90px;height:1px;background:#404040;"></div>
<div style="left:778px;top:489px;width:1px;height:25px;background:#404040;"></div>
<div style="left:689px;top:489px;width:89px;height:1px;background:#ffffff;"></div>
<div style="left:689px;top:489px;width:1px;height:24px;background:#ffffff;"></div>
<div style="left:690px;top:512px;width:88px;height:1px;background:#808080;"></div>
<div style="left:777px;top:490px;width:1px;height:23px;background:#808080;"></div>
<div style="left:690px;top:490px;width:87px;height:1px;background:#d4d0c8;"></div>
<div style="left:690px;top:490px;width:1px;height:22px;background:#d4d0c8;"></div>
<div id="tx">
<span class="t" style="left:24.00px;top:6.69px;font-size:11px;line-height:13px;color:#fff;font-weight:bold;transform:scaleX(1.0767);">81 - Veranlagung</span>
<span class="t" style="left:16.00px;top:32.69px;font-size:11px;line-height:13px;color:#000;transform:scaleX(0.9839);text-decoration:none">1 Auswahl</span>
<span class="t" style="left:77.00px;top:29.84px;font-size:12px;line-height:14px;color:#000;transform:scaleX(0.9218);">0123456/GStB/2/(SB)</span>
<span class="t" style="left:103.00px;top:56.84px;font-size:12px;line-height:14px;color:#000;transform:scaleX(0.8528);">2 Historie</span>
<span class="t" style="left:160.00px;top:56.84px;font-size:12px;line-height:14px;color:#000;transform:scaleX(0.8827);">3 Stornierung</span>
<span class="t" style="left:238.00px;top:56.84px;font-size:12px;line-height:14px;color:#000;transform:scaleX(0.8993);">3 Buchungen</span>
<span class="t" style="left:19.00px;top:54.84px;font-size:12px;line-height:14px;color:#000;transform:scaleX(0.9058);">1 Veranlagung</span>
<span class="t" style="left:30.00px;top:89.84px;font-size:12px;line-height:14px;color:#000;transform:scaleX(0.8656);">Mandant</span>
<span class="t" style="left:94.00px;top:91.84px;font-size:12px;line-height:14px;color:#000;transform:scaleX(0.8512);">1234</span>
<span class="t" style="left:130.00px;top:91.84px;font-size:12px;line-height:14px;color:#000;transform:scaleX(0.8718);">Gemeindeverwaltung Musterstadt</span>
<span class="t" style="left:335.50px;top:89.84px;font-size:12px;line-height:14px;color:#000;transform:scaleX(0.8618);">HH-Jahr</span>
<span class="t" style="left:400.00px;top:91.84px;font-size:12px;line-height:14px;color:#000;transform:scaleX(0.8512);">2008</span>
<span class="t" style="left:438.00px;top:89.84px;font-size:12px;line-height:14px;color:#000;transform:scaleX(0.8442);">Einnahmeart</span>
<span class="t" style="left:520.00px;top:91.84px;font-size:12px;line-height:14px;color:#000;transform:scaleX(0.8022);">GStB</span>
<span class="t" style="left:574.00px;top:91.84px;font-size:12px;line-height:14px;color:#000;transform:scaleX(0.8458);">Grundsteuer B</span>
<span class="t" style="left:29.00px;top:117.84px;font-size:12px;line-height:14px;color:#000;transform:scaleX(0.9277);">Adr./Obj.</span>
<span class="t" style="left:94.00px;top:119.84px;font-size:12px;line-height:14px;color:#000;transform:scaleX(0.8715);">0123456</span>
<span class="t" style="left:211.00px;top:119.84px;font-size:12px;line-height:14px;color:#000;transform:scaleX(0.7143);">2</span>
<span class="t" style="left:250.00px;top:119.84px;font-size:12px;line-height:14px;color:#000;transform:scaleX(0.8784);">Muster, Paul</span>
<span class="t" style="left:51.00px;top:149.84px;font-size:12px;line-height:14px;color:#000;transform:scaleX(0.8515);">Einnahmeart</span>
<span class="t" style="left:123.00px;top:149.84px;font-size:12px;line-height:14px;color:#000;transform:scaleX(0.8417);">St.Jahr</span>
<span class="t" style="left:174.50px;top:149.84px;font-size:12px;line-height:14px;color:#000;transform:scaleX(0.7812);">Art</span>
<span class="t" style="left:221.50px;top:149.84px;font-size:12px;line-height:14px;color:#000;transform:scaleX(0.8784);">Soll neu</span>
<span class="t" style="left:302.00px;top:149.84px;font-size:12px;line-height:14px;color:#000;transform:scaleX(0.8314);">Soll alt</span>
<span class="t" style="left:375.50px;top:149.84px;font-size:12px;line-height:14px;color:#000;transform:scaleX(0.8965);">Status</span>
<span class="t" style="left:441.50px;top:149.84px;font-size:12px;line-height:14px;color:#000;transform:scaleX(0.9037);">Bescheid</span>
<span class="t" style="left:440.50px;top:162.84px;font-size:12px;line-height:14px;color:#000;transform:scaleX(0.8993);">ergangen</span>
<div style="left:0;top:0;width:554px;height:540px;overflow:hidden"><span class="t" style="left:508.00px;top:149.84px;font-size:12px;line-height:14px;color:#000;transform:scaleX(0.9028);">Erst..-datum</span></div>
<span class="t" style="left:54.00px;top:180.84px;font-size:12px;line-height:14px;color:#000;transform:scaleX(0.8697);">0303</span>
<span class="t" style="left:64.00px;top:198.84px;font-size:12px;line-height:14px;color:#000;transform:scaleX(0.8697);">0303</span>
<span class="t" style="left:123.00px;top:198.84px;font-size:12px;line-height:14px;color:#000;transform:scaleX(0.8697);">2008</span>
<span class="t" style="left:162.00px;top:198.84px;font-size:12px;line-height:14px;color:#000;transform:scaleX(0.8125);">V</span>
<span class="t" style="left:234.00px;top:198.84px;font-size:12px;line-height:14px;color:#000;transform:scaleX(0.8823);">1.339,23</span>
<span class="t" style="left:331.00px;top:198.84px;font-size:12px;line-height:14px;color:#000;transform:scaleX(0.8656);">0,00</span>
<span class="t" style="left:359.00px;top:198.84px;font-size:12px;line-height:14px;color:#000;transform:scaleX(0.8907);">Gebucht</span>
<div style="left:0;top:0;width:554px;height:540px;overflow:hidden"><span class="t" style="left:503.00px;top:198.84px;font-size:12px;line-height:14px;color:#000;transform:scaleX(0.8694);">21.08.2009</span></div>
<span class="t" style="left:54.00px;top:216.84px;font-size:12px;line-height:14px;color:#000;transform:scaleX(0.8697);">0304</span>
<span class="t" style="left:582.00px;top:148.84px;font-size:12px;line-height:14px;color:#000;transform:scaleX(0.8539);">Fälligkeit</span>
<span class="t" style="left:640.00px;top:148.84px;font-size:12px;line-height:14px;color:#000;transform:scaleX(0.7812);">Art</span>
<span class="t" style="left:683.50px;top:148.84px;font-size:12px;line-height:14px;color:#000;transform:scaleX(0.8650);">Betrag</span>
<span class="t" style="left:42.00px;top:268.84px;font-size:12px;line-height:14px;color:#000;transform:scaleX(0.8750);">Anmeldung der Grundsteuer</span>
<span class="t" style="left:181.00px;top:268.84px;font-size:12px;line-height:14px;color:#000;transform:scaleX(0.8653);">Fristüberschreitung seit</span>
<span class="t" style="left:296.00px;top:268.84px;font-size:12px;line-height:14px;color:#000;transform:scaleX(0.8938);">Höhe des Zahlungsanspruchs</span>
<span class="t" style="left:445.00px;top:268.84px;font-size:12px;line-height:14px;color:#000;transform:scaleX(0.8950);">Verspätungszuschlag</span>
<span class="t" style="left:553.00px;top:268.84px;font-size:12px;line-height:14px;color:#000;transform:scaleX(0.8870);">Geprüfter Verspätungszuschlag</span>
<span class="t" style="left:24.00px;top:371.84px;font-size:12px;line-height:14px;color:#000;transform:scaleX(0.8417);">interner Vermerk</span>
<span class="t" style="left:407.50px;top:371.84px;font-size:12px;line-height:14px;color:#000;transform:scaleX(0.8698);">Bescheidvermerk</span>
<span class="t" style="left:35.00px;top:456.84px;font-size:12px;line-height:14px;color:#000;transform:scaleX(0.8768);">Jahressteuer anteilig</span>
<span class="t" style="left:288.00px;top:450.84px;font-size:12px;line-height:14px;color:#000;transform:scaleX(0.8666);">Objektabmeldedat.</span>
<span class="t" style="left:288.00px;top:463.84px;font-size:12px;line-height:14px;color:#000;transform:scaleX(0.8540);">ignorieren</span>
<span class="t" style="left:413.00px;top:456.84px;font-size:12px;line-height:14px;color:#000;transform:scaleX(0.8741);">Keine Bagatellgrenze</span>
<span class="t" style="left:528.00px;top:441.84px;font-size:12px;line-height:14px;color:#000;transform:scaleX(0.8704);">Bescheiddatum</span>
<span class="t" style="left:624.00px;top:441.84px;font-size:12px;line-height:14px;color:#000;transform:scaleX(0.9119);">Buchen</span>
<span class="t" style="left:708.00px;top:441.84px;font-size:12px;line-height:14px;color:#000;transform:scaleX(0.8766);">Buchungskreis</span>
<span class="t" style="left:532.00px;top:463.84px;font-size:12px;line-height:14px;color:#000;transform:scaleX(0.8777);">12.01.2008</span>
<span class="t" style="left:628.00px;top:463.84px;font-size:12px;line-height:14px;color:#000;transform:scaleX(0.8777);">12.01.2008</span>
<span class="t" style="left:487.50px;top:493.84px;font-size:12px;line-height:14px;color:#000;transform:scaleX(0.8879);">Übernehmen</span>
<span class="t" style="left:606.50px;top:494.84px;font-size:12px;line-height:14px;color:#ffffff;transform:scaleX(0.9430);">Drucken</span>
<span class="t" style="left:605.50px;top:493.84px;font-size:12px;line-height:14px;color:#808080;transform:scaleX(0.9430);">Drucken</span>
<span class="t" style="left:716.00px;top:494.84px;font-size:12px;line-height:14px;color:#ffffff;transform:scaleX(0.9369);">Buchen</span>
<span class="t" style="left:715.00px;top:493.84px;font-size:12px;line-height:14px;color:#808080;transform:scaleX(0.9369);">Buchen</span>
</div>
</div></body></html>
